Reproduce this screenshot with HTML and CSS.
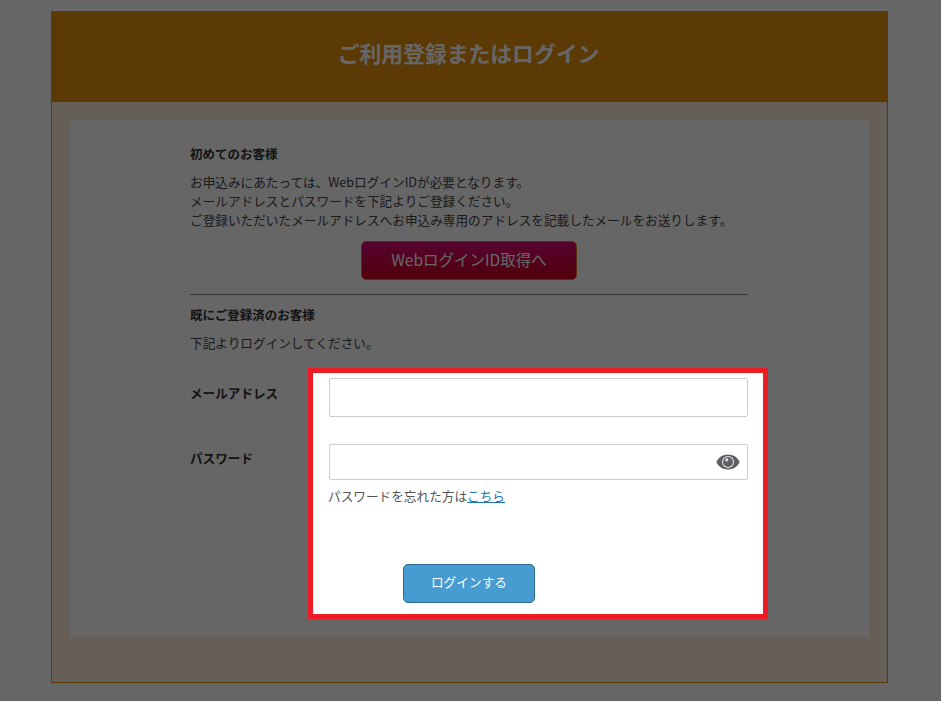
FILE: index.html
```html
<!DOCTYPE html>
<html lang="ja">
<head>
<meta charset="utf-8">
<title>ご利用登録またはログイン</title>
<link rel="stylesheet" href="styles.css">
</head>
<body>
<div class="page">
  <header class="head"><h1 class="title">ご利用登録またはログイン</h1></header>
  <main class="panel">
    <div class="content">
      <h2 class="sub">初めてのお客様</h2>
      <p class="text">お申込みにあたっては、WebログインIDが必要となります。<br>メールアドレスとパスワードを下記よりご登録ください。<br>ご登録いただいたメールアドレスへお申込み専用のアドレスを記載したメールをお送りします。</p>
      <div class="cta"><a class="btn-get" href="#">WebログインID取得へ</a></div>
      <hr class="rule">
      <h2 class="sub">既にご登録済のお客様</h2>
      <p class="text">下記よりログインしてください。</p>
      <form class="login">
        <div class="labels">
          <label class="label label-mail">メールアドレス</label>
          <label class="label label-pass">パスワード</label>
        </div>
        <div class="spot">
          <input class="input input-mail" type="text">
          <div class="pass-wrap">
            <input class="input input-pass" type="password">
            <svg class="eye" viewBox="0 0 24 16" width="24" height="16" aria-hidden="true">
              <path fill="#606060" d="M12 0.5C6.6 0.5 2.2 3.6 0.3 8c1.9 4.4 6.3 7.5 11.7 7.5S21.800 12.400 23.700 8C21.800 3.600 17.400 0.500 12 0.500z"/>
              <circle cx="12" cy="8" r="6" fill="#d8e6f2"/>
              <circle cx="12" cy="8" r="4.900" fill="#606060"/>
              <path fill="#d8e6f2" d="M10.800 3.900a1.800 1.800 0 1 1-1.700 2.900a4.200 4.200 0 0 1 1.700-2.900z"/>
            </svg>
          </div>
          <p class="forgot">パスワードを忘れた方は<a class="forgot-link" href="#">こちら</a></p>
          <button class="btn-login" type="button">ログインする</button>
        </div>
      </form>
    </div>
  </main>
</div>
</body>
</html>
```

FILE: styles.css
```css
* { box-sizing: border-box; }
html, body { margin: 0; height: 100%; }
body {
  background: #fff;
  font-family: "Noto Sans CJK JP", "Liberation Sans", sans-serif;
  color: #333;
  overflow: hidden;
}
.page {
  width: 837px;
  height: 672px;
  margin: 11px 0 0 51px;
  border: 1px solid #e4910f;
  border-top: 0;
  background: #ffeedd;
}
.head {
  height: 91px;
  margin: 0 -1px;
  padding: 0 2px 8px 0;
  background: #e4910f;
  display: flex;
  align-items: center;
  justify-content: center;
}
.title {
  margin: 0;
  font-size: 21.800px;
  font-weight: 700;
  color: #fff;
}
.panel {
  margin: 18px 18px 0;
  height: 517px;
  background: #fff;
  padding: 24px 120px 0;
}
.content { width: 558px; }
.sub {
  margin: 0;
  font-size: 12.500px;
  line-height: 19px;
  font-weight: 700;
}
.text {
  margin: 9px 0 0;
  font-size: 12.650px;
  line-height: 19px;
  color: #444;
}
.cta { margin-top: 12px; display: flex; justify-content: center; margin-left: -1px; }
.btn-get {
  display: flex;
  align-items: center;
  justify-content: center;
  width: 216px;
  height: 39px;
  padding: 0 0 3px 1px;
  border: 1px solid #d57c1e;
  border-radius: 5px;
  background: linear-gradient(#d60a78, #cc0018);
  color: #fff;
  font-size: 15.500px;
  text-decoration: none;
}
.rule { height: 1px; margin: 14px 0 10px; border: 0; background: #888; }
.login { display: flex; align-items: flex-start; margin-top: 16px; }
.labels { width: 118px; flex: none; }
.label { display: block; font-size: 12.600px; line-height: 20px; font-weight: 700; }
.label-mail { margin-top: 15px; }
.label-pass { margin-top: 45px; }
.spot {
  position: relative;
  z-index: 2;
  width: 460px;
  height: 251px;
  flex: none;
  border: 5px solid #ed1c24;
  background: #fff;
  padding: 5px 15px 0 16px;
  box-shadow: 0 0 0 2000px rgba(0, 0, 0, .6);
}
.input {
  display: block;
  width: 100%;
  border: 1px solid #ccc;
  border-radius: 2px;
  background: #fff;
  outline: none;
}
.input-mail { height: 39px; }
.pass-wrap { position: relative; margin-top: 27px; }
.input-pass { height: 36px; }
.eye { position: absolute; top: 10px; right: 8px; }
.forgot {
  margin: 6px 0 0 -1px;
  font-size: 12.650px;
  line-height: 20px;
  color: #555;
}
.forgot-link { color: #1b75bc; text-decoration: underline; }
.btn-login {
  display: block;
  width: 132px;
  height: 39px;
  margin: 58px 0 0 74px;
  padding: 0 0 4px;
  border: 1px solid #2e6a90;
  border-radius: 5px;
  background: #469bd0;
  color: #fff;
  font: 12.700px "Noto Sans CJK JP", sans-serif;
}
```
